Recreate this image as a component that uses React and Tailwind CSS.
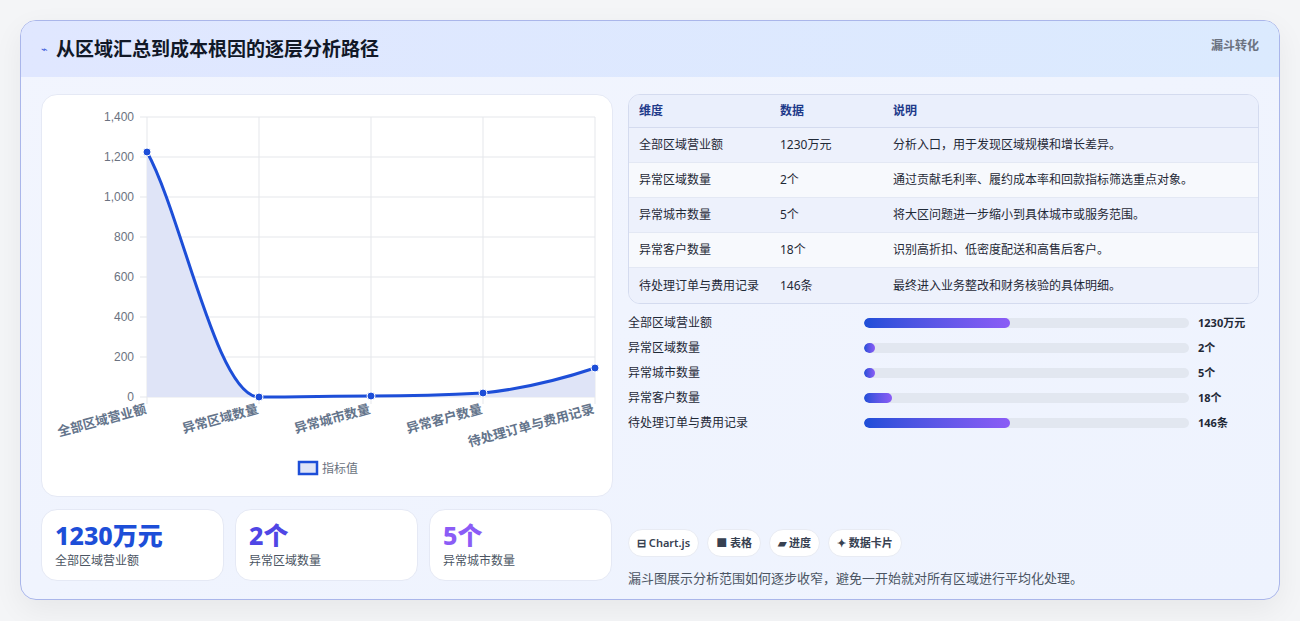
const F = { fontFamily: '"Noto Sans", "Noto Sans CJK SC", sans-serif' };
const rows = [
  ["全部区域营业额", "1230万元", "分析入口，用于发现区域规模和增长差异。"],
  ["异常区域数量", "2个", "通过贡献毛利率、履约成本率和回款指标筛选重点对象。"],
  ["异常城市数量", "5个", "将大区问题进一步缩小到具体城市或服务范围。"],
  ["异常客户数量", "18个", "识别高折扣、低密度配送和高售后客户。"],
  ["待处理订单与费用记录", "146条", "最终进入业务整改和财务核验的具体明细。"],
];
const bars = [
  ["全部区域营业额", "1230万元", 45],
  ["异常区域数量", "2个", 3.5],
  ["异常城市数量", "5个", 3.5],
  ["异常客户数量", "18个", 8.5],
  ["待处理订单与费用记录", "146条", 45],
];
function Chart() {
  const xs = [105, 217, 329, 441, 553];
  const ys = [0, 200, 400, 600, 800, 1000, 1200, 1400];
  const labels = ["全部区域营业额", "异常区域数量", "异常城市数量", "异常客户数量", "待处理订单与费用记录"];
  const pts = [[105, 57], [217, 302], [329, 301], [441, 298], [553, 273]];
  const line = "M105,57 C140,120 175,302 217,302 C260,302 290,301 329,301 C370,301 405,300 441,298 C480,294 520,284 553,273";
  return (
    <svg width="572" height="403" className="block">
      {ys.map((v, i) => {
        const y = 302 - i * 40;
        return (
          <g key={v}>
            <line x1="98" x2="553" y1={y} y2={y} stroke="#e5e7eb" />
            <text x="92" y={y + 4} textAnchor="end" fontSize="12" fill="#6b7280" fontFamily="Liberation Sans, sans-serif">{v.toLocaleString("en-US")}</text>
          </g>
        );
      })}
      {xs.map((x) => <line key={x} x1={x} x2={x} y1="22" y2="309" stroke="#e5e7eb" />)}
      <path d={line + " L553,302 L105,302 Z"} fill="#dfe4f7" />
      <path d={line} fill="none" stroke="#1d4ed8" strokeWidth="3" />
      {pts.map(([x, y]) => <circle key={x} cx={x} cy={y} r="4" fill="#1d4ed8" stroke="#fff" strokeWidth="1" />)}
      {labels.map((l, i) => (
        <text key={l} x={xs[i]} y="318" textAnchor="end" fontSize="13" fontWeight="600" fill="#64748b" transform={`rotate(-15 ${xs[i]} 318)`} style={F}>{l}</text>
      ))}
      <rect x="257" y="367" width="18" height="12" fill="#dfe4f7" stroke="#1d4ed8" strokeWidth="2.5" />
      <text x="280" y="378" fontSize="12" fill="#6b7280" style={F}>指标值</text>
    </svg>
  );
}
export default function App() {
  return (
    <div className="w-[1300px] h-[621px] bg-[#f4f5f7] pt-[20px] px-[20px]" style={F}>
      <div className="w-[1260px] h-[580px] rounded-2xl border border-[#aab6ea] bg-gradient-to-br from-[#f2f5fe] to-[#eef3fe] overflow-hidden shadow-[0_10px_30px_rgba(0,0,0,0.06)]">
        <div className="h-[56px] flex items-center justify-between px-[20px] bg-gradient-to-r from-[#e0e7ff] to-[#dbeafe]">
          <div className="flex items-center gap-[8px]">
            <span className="text-[#3b5bdb] text-[11px]">⌁</span>
            <span className="text-[19px] font-bold text-[#111827]">从区域汇总到成本根因的逐层分析路径</span>
          </div>
          <span className="text-[12px] font-semibold text-[#6b7280] self-start mt-[16px]">漏斗转化</span>
        </div>
        <div className="flex gap-[15px] px-[20px] pt-[17px]">
          <div className="w-[572px] flex flex-col gap-[12px]">
            <div className="h-[403px] bg-white rounded-2xl border border-[#e5e9f5]"><Chart /></div>
            <div className="flex gap-[11px]">
              {[["1230万元", "text-[#1d4ed8]"], ["2个", "text-[#4f46e5]"], ["5个", "text-[#8b5cf6]"]].map(([v, c], i) => (
                <div key={v} className="w-[183px] h-[72px] bg-white rounded-2xl border border-[#e5e9f5] px-[13px] pt-[9px]">
                  <div className={`text-[25px] font-extrabold leading-[32px] ${c}`}>{v}</div>
                  <div className="text-[12px] text-[#4b5563] mt-[1px]">{["全部区域营业额", "异常区域数量", "异常城市数量"][i]}</div>
                </div>
              ))}
            </div>
          </div>
          <div className="flex-1 flex flex-col">
            <div className="rounded-xl border border-[#d4dbef] overflow-hidden text-[12px]">
              <div className="flex h-[33px] items-center bg-[#eaeffc] text-[#1e3a8a] font-semibold border-b border-[#d4dbef]">
                <div className="w-[151px] pl-[10px]">维度</div><div className="w-[113px]">数据</div><div>说明</div>
              </div>
              {rows.map((r, i) => (
                <div key={r[0]} className={`flex h-[35px] items-center text-[#1f2937] ${i % 2 ? "bg-[#f7f9fd]" : "bg-[#edf1fc]"} ${i < 4 ? "border-b border-[#e3e8f4]" : ""}`}>
                  <div className="w-[151px] pl-[10px]">{r[0]}</div><div className="w-[113px]">{r[1]}</div><div>{r[2]}</div>
                </div>
              ))}
            </div>
            <div className="flex flex-col gap-[9px] mt-[11px]">
              {bars.map(([l, v, w]) => (
                <div key={l} className="flex items-center h-[16px] text-[12px] text-[#1f2937]">
                  <div className="w-[236px]">{l}</div>
                  <div className="w-[325px] h-[10px] rounded-full bg-[#e2e7f0] overflow-hidden">
                    <div className="h-full rounded-full bg-gradient-to-r from-[#1d4ed8] to-[#8b5cf6]" style={{ width: `${w}%` }} />
                  </div>
                  <div className="ml-[9px] font-bold text-[11px]">{v}</div>
                </div>
              ))}
            </div>
            <div className="flex gap-[8px] mt-[98px] text-[11px] font-semibold text-[#374151]">
              {["⊟ Chart.js", "■ 表格", "▰ 进度", "✦ 数据卡片"].map((t) => (
                <div key={t} className="h-[28px] px-[8px] flex items-center bg-white rounded-full border border-[#e8ebf3]">{t}</div>
              ))}
            </div>
            <div className="mt-[12px] text-[13px] text-[#4b5563]">漏斗图展示分析范围如何逐步收窄，避免一开始就对所有区域进行平均化处理。</div>
          </div>
        </div>
      </div>
    </div>
  );
}
